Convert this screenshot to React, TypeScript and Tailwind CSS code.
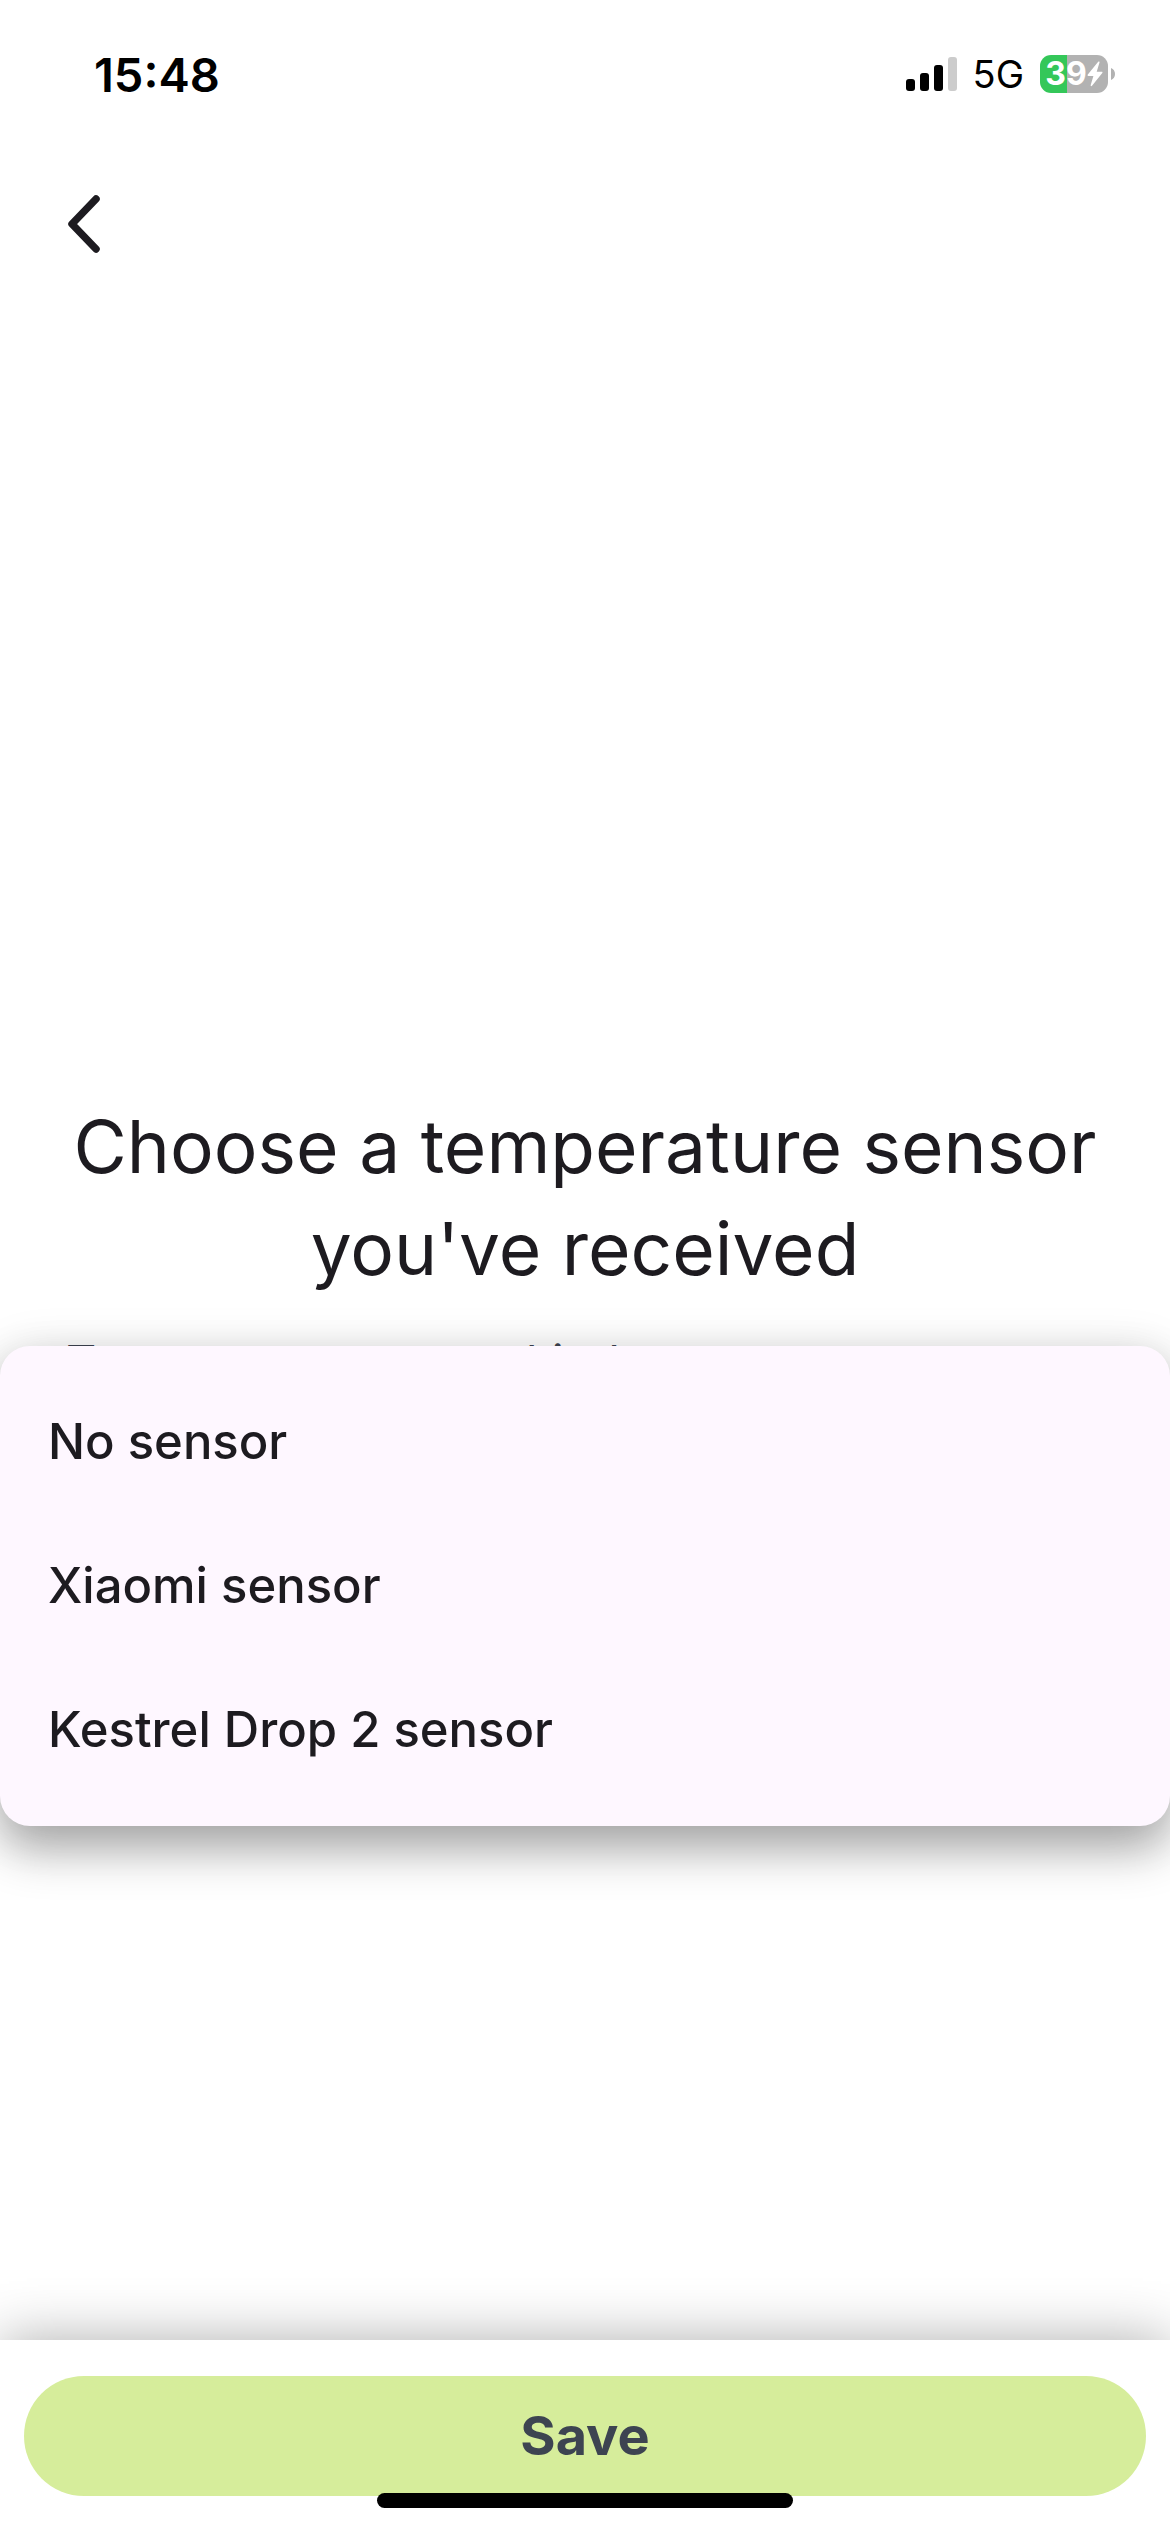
import { useState } from 'react';

const sensors = ['No sensor', 'Xiaomi sensor', 'Kestrel Drop 2 sensor'];

function SignalIcon() {
  return (
    <svg width="51" height="34" viewBox="0 0 51 34" role="img" aria-label="Signal strength">
      <rect x="0" y="22" width="9" height="12" rx="3" fill="#000" />
      <rect x="14" y="16" width="9" height="18" rx="3" fill="#000" />
      <rect x="28" y="8" width="9" height="26" rx="3" fill="#000" />
      <rect x="42" y="0" width="9" height="34" rx="3" fill="#ccc" />
    </svg>
  );
}

function Battery() {
  return (
    <div className="flex items-center gap-[3px]">
      <div className="flex h-[38px] w-[68px] items-center justify-center rounded-[11px] bg-[linear-gradient(to_right,#34c759_40%,#b2b2b2_40%)] text-white">
        <span className="text-[32px] leading-none font-bold">39</span>
        <svg width="16" height="26" viewBox="0 0 16 26" aria-hidden="true">
          <path
            d="M11.2 0.8 0.8 13.6c-.5.7-.2 1.3.6 1.3h5L3.7 24c-.3 1.1.6 1.6 1.3.8L15.3 12c.5-.7.2-1.3-.6-1.3h-5l2.8-9.1c.3-1.1-.6-1.6-1.3-.8z"
            fill="#fff"
          />
        </svg>
      </div>
      <svg width="5" height="12" viewBox="0 0 5 12" aria-hidden="true">
        <path d="M0 0c2.500 1 4 3.200 4 6s-1.500 5-4 6z" fill="#b2b2b2" />
      </svg>
    </div>
  );
}

function StatusBar() {
  return (
    <div className="flex h-[148px] items-center justify-between pr-[54px] pl-[94px] text-black">
      <time className="text-[47px] leading-none font-semibold">15:48</time>
      <div className="flex items-center gap-4">
        <SignalIcon />
        <span className="text-[38px] leading-none">5G</span>
        <Battery />
      </div>
    </div>
  );
}

export default function App() {
  const [selected, setSelected] = useState('');

  return (
    <div className="flex min-h-screen flex-col overflow-hidden bg-white font-[Inter,sans-serif] text-[#1d1b20]">
      <StatusBar />
      <header className="flex h-[152px] items-center px-12">
        <button type="button" aria-label="Back" className="flex h-[72px] w-[72px] items-center pl-5">
          <svg width="32" height="58" viewBox="0 0 32 58" fill="none" aria-hidden="true">
            <path
              d="M28 4 4 29l24 25"
              stroke="#1d1b20"
              strokeWidth="7.500"
              strokeLinecap="round"
              strokeLinejoin="round"
            />
          </svg>
        </button>
      </header>

      <main className="flex grow flex-col justify-center gap-8 px-[66px]">
        <h1 className="text-center text-[73px] leading-[102px]">
          Choose a temperature sensor you've received
        </h1>
        <div className="relative h-[212px]">
          <span id="sensor-label" className="text-[47px] leading-[60px] text-[#3d4451]">
            Temperature sensor kind
          </span>
          <ul
            role="listbox"
            aria-labelledby="sensor-label"
            className="absolute top-[14px] -right-[66px] -left-[66px] rounded-[30px] bg-[#fef7ff] py-6 shadow-[0_24px_48px_rgba(0,0,0,0.3),0_6px_50px_rgba(0,0,0,0.12)]"
          >
            {sensors.map((name) => (
              <li key={name}>
                <button
                  type="button"
                  role="option"
                  aria-selected={selected === name}
                  onClick={() => setSelected(name)}
                  className="flex h-36 w-full items-center px-12 text-[49px] leading-[72px] font-medium"
                >
                  {name}
                </button>
              </li>
            ))}
          </ul>
        </div>
      </main>

      <footer className="relative flex flex-col items-center bg-white px-6 pt-9 pb-6 shadow-[0_0_54px_rgba(0,0,0,0.32)]">
        <button
          type="button"
          className="h-[120px] w-full rounded-full bg-[#d6ed9b] text-[54px] leading-none font-bold text-[#3d4451]"
        >
          Save
        </button>
        <div className="-mt-[3px] h-[15px] w-[416px] rounded-full bg-black" />
      </footer>
    </div>
  );
}
